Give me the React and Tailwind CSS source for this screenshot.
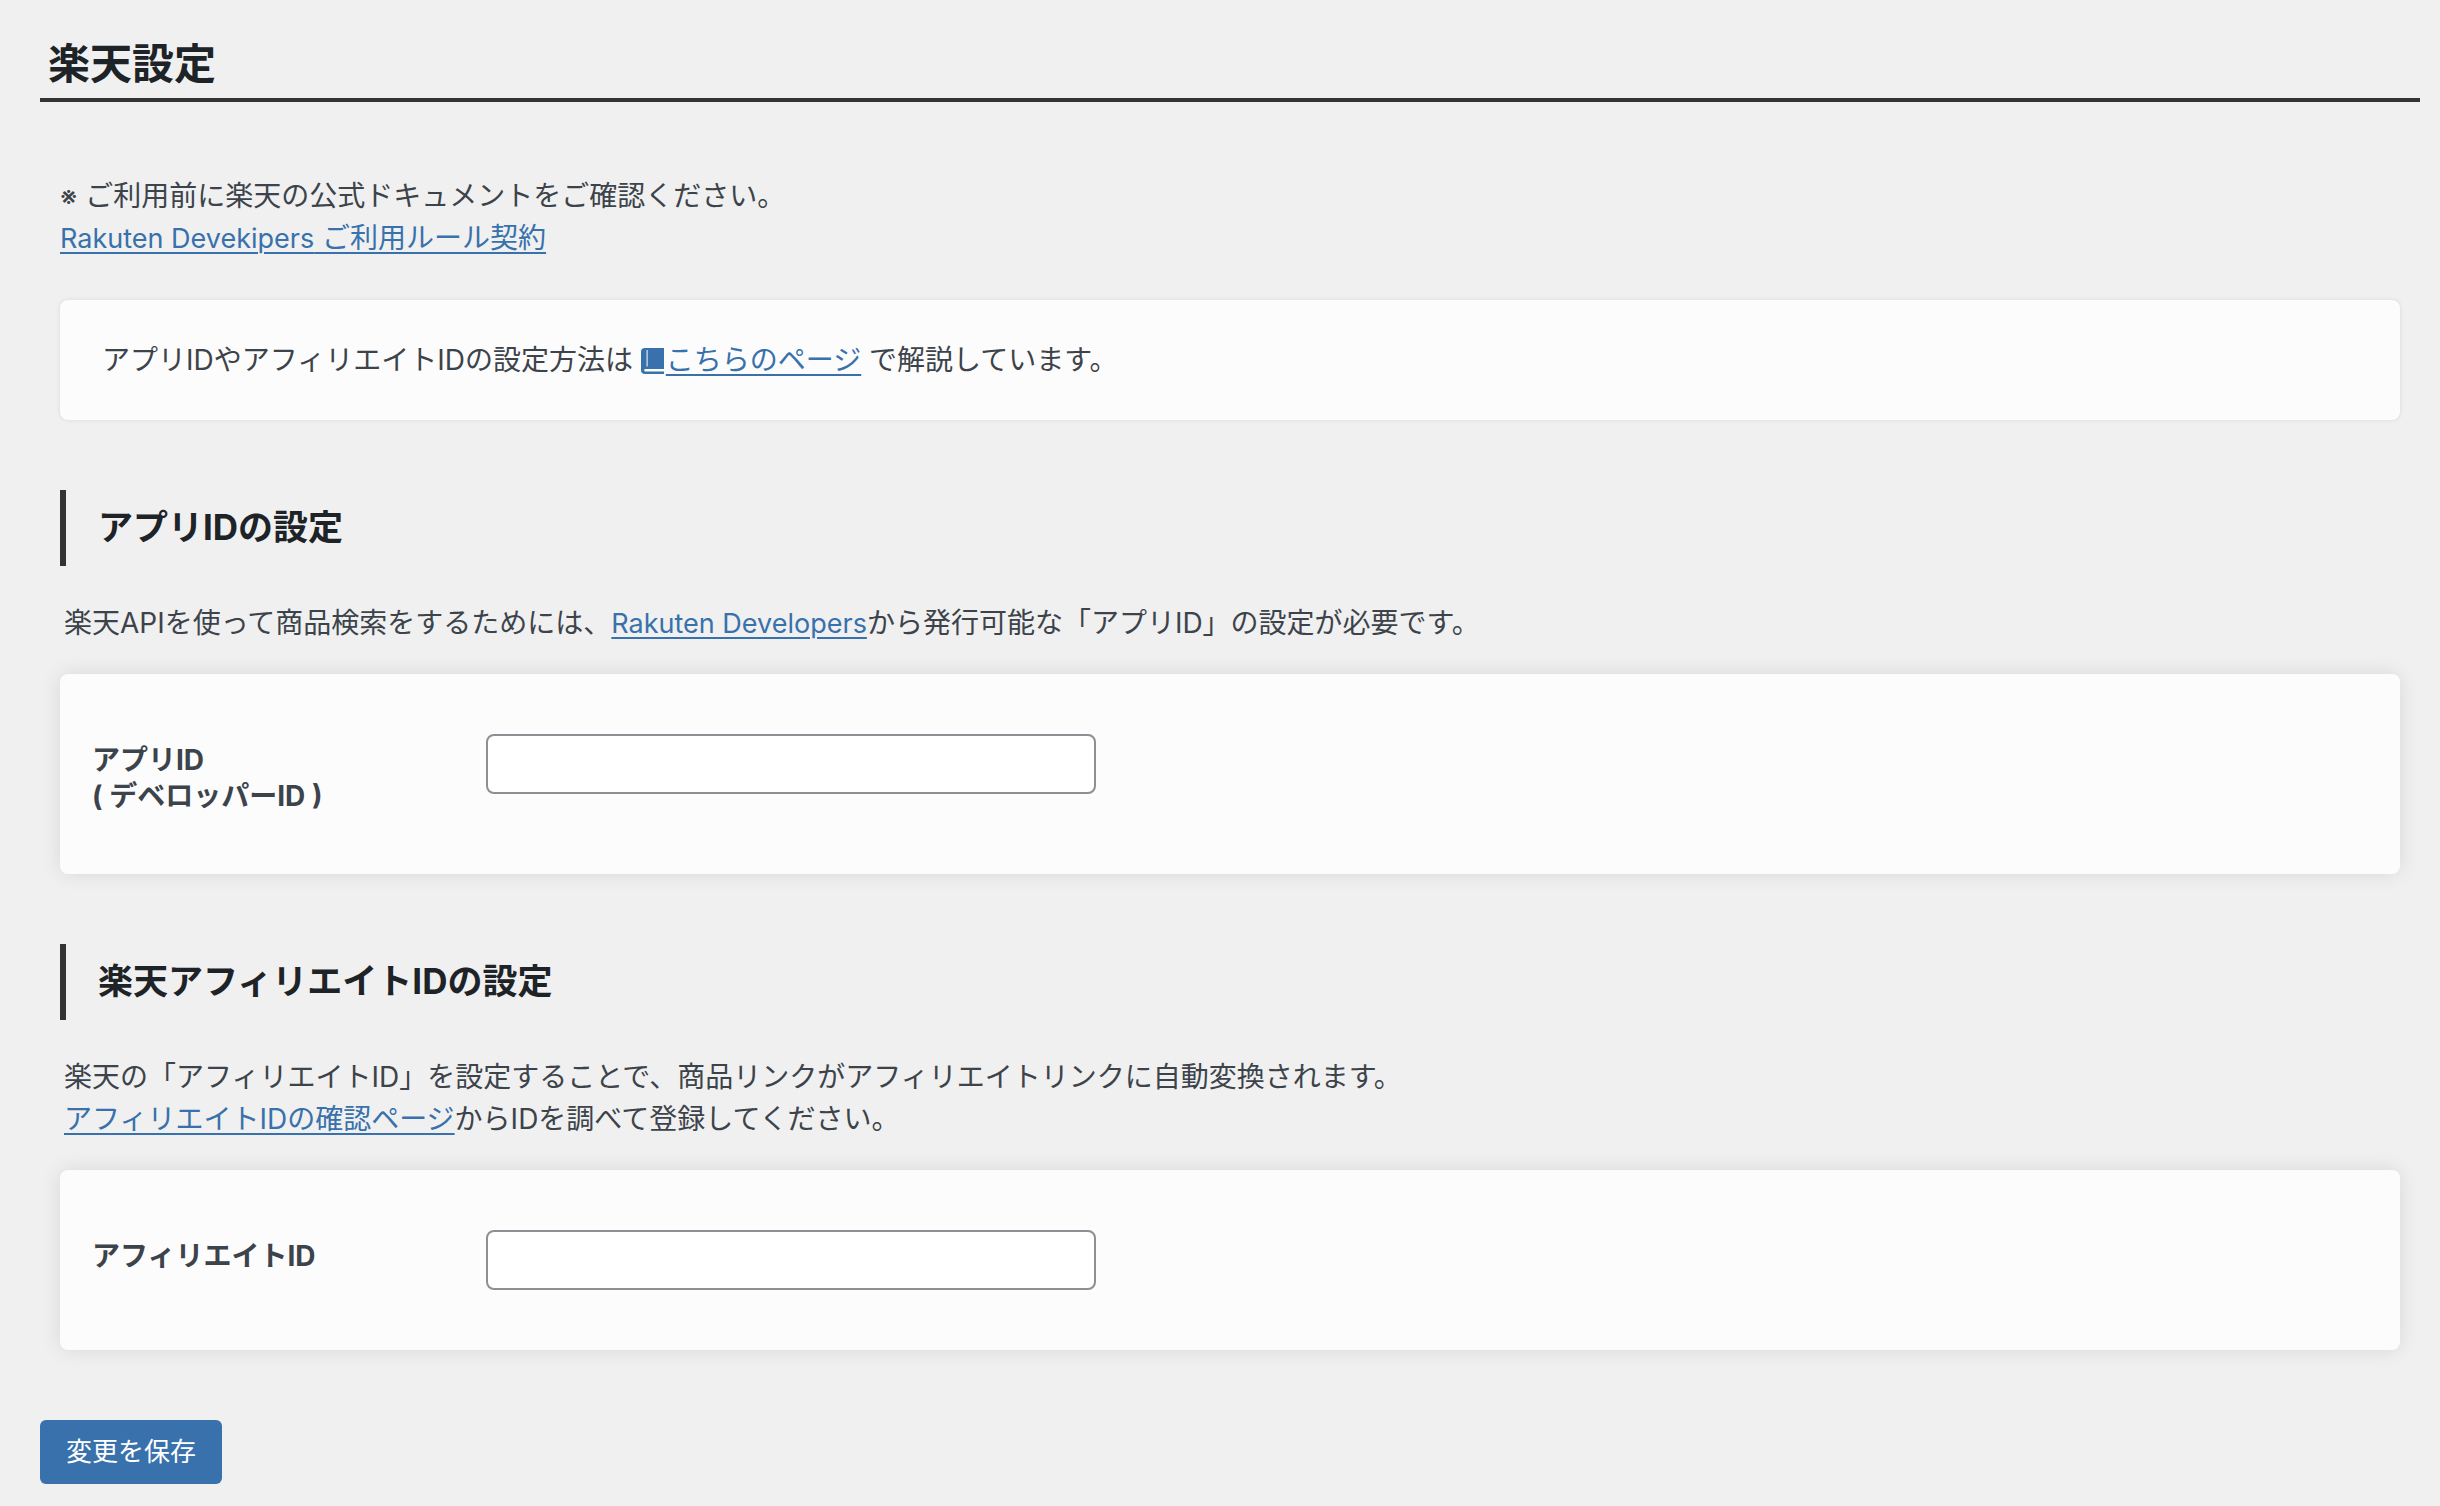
import { useState } from "react";

function TextLink({ href, children }) {
  return (
    <a
      href={href}
      className="text-[#3871ac] underline decoration-2 underline-offset-4 hover:text-[#1d2327]"
    >
      {children}
    </a>
  );
}

function BookIcon() {
  return (
    <svg
      viewBox="0 0 23 26"
      className="inline-block w-[23px] h-[26px] mr-[2px] align-[-4px]"
      fill="#3871ac"
      aria-hidden="true"
    >
      <path
        fillRule="evenodd"
        d="M4 0H23V21H4.4A1 1 0 0 0 4.4 23.4H23V26H4A4 4 0 0 1 0 22V4A4 4 0 0 1 4 0ZM5.6 2V18.6H6.6V2Z"
      />
    </svg>
  );
}

function SectionTitle({ children }) {
  return (
    <h3 className="mt-[70px] flex items-center h-[76px] border-l-[6px] border-[#333] pl-8 pb-[2px] text-[35px] font-bold text-[#1d2327]">
      {children}
    </h3>
  );
}

function FieldCard({ id, label, value, onChange }) {
  return (
    <div className="mt-[30px] flex items-start bg-[#fcfcfc] rounded-lg shadow-[0_0_20px_rgba(0,0,0,0.1)] px-8 py-[60px]">
      <label
        htmlFor={id}
        className="w-[394px] shrink-0 pt-2 leading-9 font-bold whitespace-pre-line"
      >
        {label}
      </label>
      <input
        id={id}
        type="text"
        value={value}
        onChange={(e) => onChange(e.target.value)}
        className="w-full max-w-[610px] h-[60px] px-4 bg-white border-2 border-[#8c8f94] rounded-lg outline-none focus:border-[#3871ac]"
      />
    </div>
  );
}

function App() {
  const [appId, setAppId] = useState("");
  const [affiliateId, setAffiliateId] = useState("");

  return (
    <div className="min-h-screen bg-[#f0f0f0] pl-10 pr-5 pt-10 pb-5 font-['Inter','Noto_Sans_CJK_JP',sans-serif] text-[28px] leading-[42px] text-[#3c434a]">
      <h2 className="pl-2 pb-[10px] border-b-4 border-[#333] text-[42px] leading-[48px] font-bold text-[#1d2327]">
        楽天設定
      </h2>

      <form onSubmit={(e) => e.preventDefault()}>
        <div className="px-5 pt-[73px]">
          <p>
            <span className="text-[27px] leading-none">※</span> ご利用前に楽天の公式ドキュメントをご確認ください。
            <br />
            <TextLink href="#rules">
              <span className="text-[27px] leading-none">Rakuten Devekipers</span> ご利用ルール契約
            </TextLink>
          </p>

          {/* Help notice */}
          <div className="mt-[41px] px-[42px] py-[39px] bg-[#fcfcfc] rounded-lg shadow-[0_0_4px_rgba(0,0,0,0.1)]">
            <p>
              アプリIDやアフィリエイトIDの設定方法は <BookIcon />
              <TextLink href="#help">こちらのページ</TextLink> で解説しています。
            </p>
          </div>

          {/* App ID */}
          <SectionTitle>アプリIDの設定</SectionTitle>
          <p className="mt-9 pl-1">
            楽天APIを使って商品検索をするためには、
            <TextLink href="#developers">
              <span className="text-[27px] leading-none">Rakuten Developers</span>
            </TextLink>
            から発行可能な「アプリID」の設定が必要です。
          </p>
          <FieldCard
            id="app-id"
            label={"アプリID\n( デベロッパーID )"}
            value={appId}
            onChange={setAppId}
          />

          {/* Affiliate ID */}
          <SectionTitle>楽天アフィリエイトIDの設定</SectionTitle>
          <p className="mt-9 pl-1">
            楽天の「アフィリエイトID」を設定することで、商品リンクがアフィリエイトリンクに自動変換されます。
            <br />
            <TextLink href="#affiliate">アフィリエイトIDの確認ページ</TextLink>
            からIDを調べて登録してください。
          </p>
          <FieldCard
            id="affiliate-id"
            label="アフィリエイトID"
            value={affiliateId}
            onChange={setAffiliateId}
          />
        </div>

        <button
          type="submit"
          className="mt-[70px] h-16 px-[26px] bg-[#3871ac] rounded-md text-[26px] text-white cursor-pointer hover:bg-[#2d5f94]"
        >
          変更を保存
        </button>
      </form>
    </div>
  );
}

export default App;
